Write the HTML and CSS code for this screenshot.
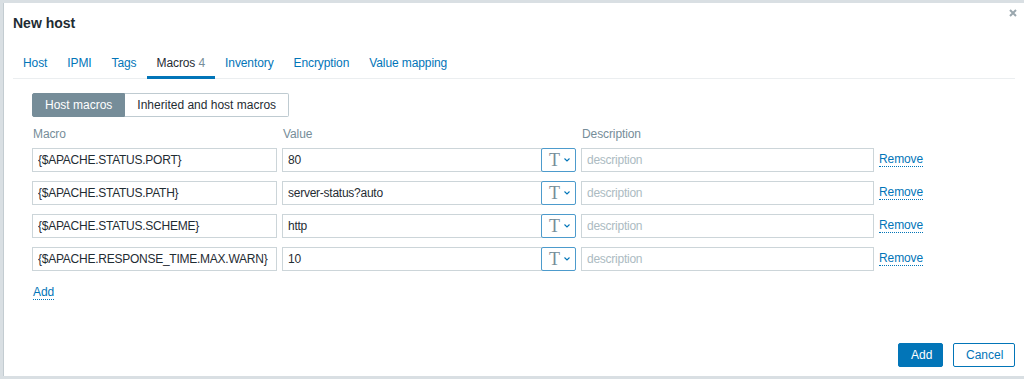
FILE: index.html
```html
<!DOCTYPE html>
<html lang="en">
<head>
  <meta charset="UTF-8" />
  <title>New host</title>
  <link rel="stylesheet" href="styles.css">
</head>
<body>
  <div class="dialog">
    <div class="dialog-header">
      <h4 class="dialog-title">New host</h4>
      <button class="btn-close" title="Close">
        <svg width="8" height="8" viewBox="0 0 8 8"><path d="M1 1L7 7M7 1L1 7" stroke="#9aa7ae" stroke-width="2"/></svg>
      </button>
    </div>

    <ul class="tabs">
      <li><a href="#">Host</a></li>
      <li><a href="#">IPMI</a></li>
      <li><a href="#">Tags</a></li>
      <li class="active"><a href="#">Macros <span class="count">4</span></a></li>
      <li><a href="#">Inventory</a></li>
      <li><a href="#">Encryption</a></li>
      <li><a href="#">Value mapping</a></li>
    </ul>

    <div class="dialog-body">
      <div class="radio-group">
        <span class="radio-btn selected">Host macros</span>
        <span class="radio-btn">Inherited and host macros</span>
      </div>

      <div class="macros-table">
        <div class="col-head">Macro</div>
        <div class="col-head">Value</div>
        <div class="col-head">Description</div>
        <div></div>

        <input class="text-field" value="{$APACHE.STATUS.PORT}">
        <div class="value-cell">
          <input class="text-field" value="80">
          <button class="type-btn"><span class="type-t">T</span><svg width="6" height="4" viewBox="0 0 6 4"><path d="M0.5 0.5L3 3L5.5 0.5" fill="none" stroke="#0275b8" stroke-width="1.1"/></svg></button>
        </div>
        <input class="text-field" placeholder="description">
        <a href="#" class="link-action">Remove</a>

        <input class="text-field" value="{$APACHE.STATUS.PATH}">
        <div class="value-cell">
          <input class="text-field" value="server-status?auto">
          <button class="type-btn"><span class="type-t">T</span><svg width="6" height="4" viewBox="0 0 6 4"><path d="M0.5 0.5L3 3L5.5 0.5" fill="none" stroke="#0275b8" stroke-width="1.1"/></svg></button>
        </div>
        <input class="text-field" placeholder="description">
        <a href="#" class="link-action">Remove</a>

        <input class="text-field" value="{$APACHE.STATUS.SCHEME}">
        <div class="value-cell">
          <input class="text-field" value="http">
          <button class="type-btn"><span class="type-t">T</span><svg width="6" height="4" viewBox="0 0 6 4"><path d="M0.5 0.5L3 3L5.5 0.5" fill="none" stroke="#0275b8" stroke-width="1.1"/></svg></button>
        </div>
        <input class="text-field" placeholder="description">
        <a href="#" class="link-action">Remove</a>

        <input class="text-field" value="{$APACHE.RESPONSE_TIME.MAX.WARN}">
        <div class="value-cell">
          <input class="text-field" value="10">
          <button class="type-btn"><span class="type-t">T</span><svg width="6" height="4" viewBox="0 0 6 4"><path d="M0.5 0.5L3 3L5.5 0.5" fill="none" stroke="#0275b8" stroke-width="1.1"/></svg></button>
        </div>
        <input class="text-field" placeholder="description">
        <a href="#" class="link-action">Remove</a>
      </div>

      <a href="#" class="link-action add-link">Add</a>
    </div>

    <div class="dialog-footer">
      <button class="btn btn-primary">Add</button>
      <button class="btn btn-alt">Cancel</button>
    </div>
  </div>
</body>
</html>
```

FILE: styles.css
```css
:root {
  --text: #1f2c33;
  --muted: #768d99;
  --link: #0275b8;
  --border: #ccd5d9;
  --line: #ebeef0;
}
* {
  margin: 0;
  padding: 0;
  box-sizing: border-box;
}
body {
  font-family: 'Liberation Sans', Arial, sans-serif;
  font-size: 12px;
  letter-spacing: -0.1px;
  color: var(--text);
  background-color: #d9dfe3;
  overflow: hidden;
}
.dialog {
  margin: 3px 0 0 3px;
  width: 1021px;
  height: 373px;
  background-color: #fff;
  border-left: 1px solid #c3ccd1;
  display: flex;
  flex-direction: column;
}
/* Header */
.dialog-header {
  display: flex;
  justify-content: space-between;
  align-items: flex-start;
  height: 44px;
  padding: 11px 0 0 9px;
}
.dialog-title {
  font-size: 14px;
  font-weight: bold;
  line-height: 18px;
  letter-spacing: 0;
  color: var(--text);
}
.btn-close {
  border: 0;
  background: none;
  width: 8px;
  height: 8px;
  margin: -5px 7px 0 0;
  display: flex;
}
/* Tabs */
.tabs {
  list-style: none;
  display: flex;
  margin: 0 9px;
  border-bottom: 1px solid var(--line);
  height: 32px;
}
.tabs li {
  margin-bottom: -1px;
}
.tabs a {
  display: block;
  padding: 9px 10px 6px;
  line-height: 14px;
  color: var(--link);
  text-decoration: none;
  border-bottom: 3px solid transparent;
}
.tabs .active a {
  color: var(--text);
  border-bottom-color: var(--link);
}
.tabs .count {
  color: var(--muted);
}
/* Body */
.dialog-body {
  flex-grow: 1;
  padding: 14px 0 0 28px;
}
.radio-group {
  display: flex;
}
.radio-btn {
  height: 24px;
  line-height: 22px;
  padding: 0 12px;
  border: 1px solid #bfcbd1;
  background-color: #fff;
  color: var(--text);
  letter-spacing: 0;
}
.radio-btn:first-child {
  border-radius: 2px 0 0 2px;
}
.radio-btn:last-child {
  border-left: 0;
  border-radius: 0 2px 2px 0;
}
.radio-btn.selected {
  background-color: var(--muted);
  border-color: var(--muted);
  color: #fff;
}
.macros-table {
  display: grid;
  grid-template-columns: 245px 294px 293px auto;
  column-gap: 5px;
  row-gap: 9px;
  align-items: center;
  margin-top: 10px;
}
.col-head {
  color: var(--muted);
  line-height: 14px;
  padding-left: 1px;
  margin-bottom: -2px;
}
.text-field {
  height: 24px;
  width: 100%;
  border: 1px solid var(--border);
  padding: 0 4px 0 5px;
  font-family: inherit;
  font-size: 12px;
  letter-spacing: -0.25px;
  color: var(--text);
  background-color: #fff;
  outline: none;
}
.text-field::placeholder {
  color: #acbbc2;
}
.value-cell {
  display: flex;
}
.value-cell .text-field {
  flex-grow: 1;
  min-width: 0;
}
.type-btn {
  flex-shrink: 0;
  width: 35px;
  height: 24px;
  margin-left: -1px;
  border: 1px solid #4d9bcc;
  border-radius: 2px;
  background-color: #fff;
  display: flex;
  align-items: center;
  justify-content: center;
  gap: 4px;
  padding-left: 2px;
}
.type-t {
  font-family: 'Liberation Serif', 'Times New Roman', serif;
  font-size: 18px;
  line-height: 18px;
  color: var(--muted);
}
.link-action {
  justify-self: start;
  color: var(--link);
  text-decoration: none;
  border-bottom: 1px dotted var(--link);
  line-height: 13px;
}
.add-link {
  display: inline-block;
  margin: 15px 0 0 1px;
}
/* Footer */
.dialog-footer {
  display: flex;
  justify-content: flex-end;
  gap: 10px;
  padding: 0 9px 9px 0;
}
.btn {
  height: 24px;
  padding: 0 12px;
  border-radius: 2px;
  font-family: inherit;
  font-size: 12px;
  border: 1px solid var(--link);
}
.btn-primary {
  background-color: var(--link);
  color: #fff;
  width: 45px;
}
.btn-alt {
  background-color: #fff;
  color: var(--link);
  width: 62px;
}
```
